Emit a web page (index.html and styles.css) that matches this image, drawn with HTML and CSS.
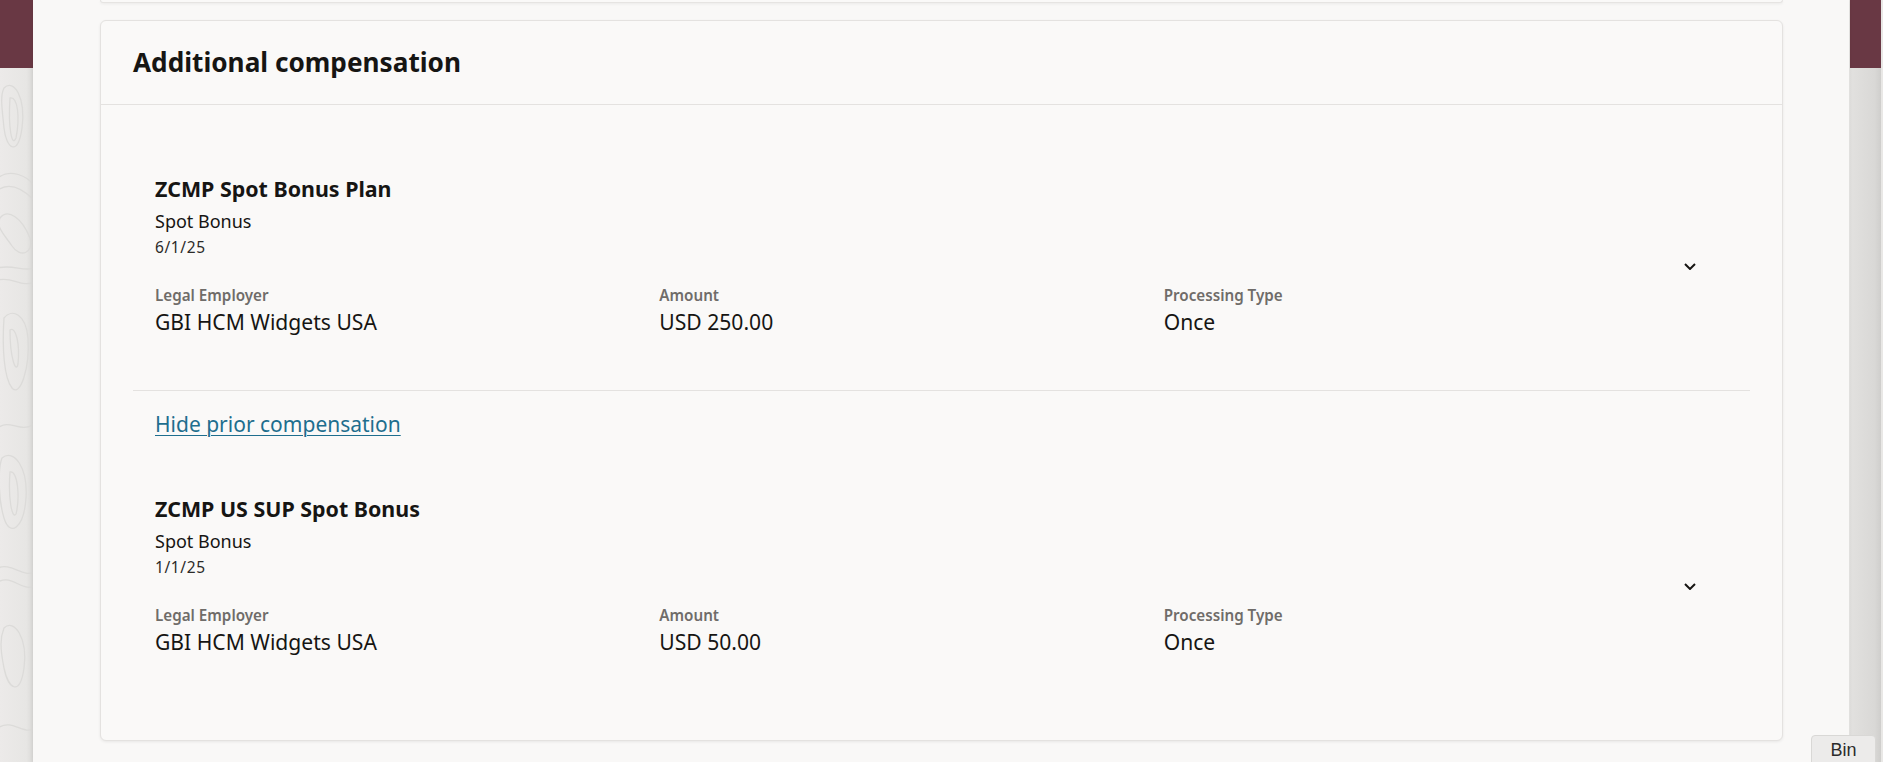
FILE: index.html
```html
<!DOCTYPE html>
<html lang="en">
<head>
<meta charset="utf-8">
<title>Additional compensation</title>
<link rel="stylesheet" href="styles.css">
</head>
<body>
<div class="page">
  <aside class="side side-left">
    <div class="band"></div>
    <div class="topo">
      <svg class="topo-art" width="33" height="694" viewBox="0 0 33 694" fill="none" stroke="#dcdbd9" stroke-width="1.3">
        <path d="M4 20 C14 10 26 30 22 60 C18 90 6 80 4 60 C2 40 0 28 4 20 Z"/>
        <path d="M10 30 C18 28 20 50 16 70 C12 80 8 60 10 30 Z"/>
        <path d="M-2 110 C10 100 28 108 34 118"/>
        <path d="M-2 122 C12 112 26 124 34 132"/>
        <path d="M0 150 C8 140 22 150 30 170 C34 186 20 190 12 178 C4 166 -4 160 0 150 Z"/>
        <path d="M-2 200 C12 196 24 204 34 200"/>
        <path d="M-2 212 C12 208 22 220 34 214"/>
        <path d="M4 250 C12 240 26 246 28 270 C30 300 20 330 12 320 C4 310 2 280 4 250 Z"/>
        <path d="M10 262 C16 258 20 276 18 296 C16 306 10 290 10 262 Z"/>
        <path d="M-2 360 C10 350 20 366 34 356"/>
        <path d="M2 390 C14 380 28 400 26 430 C24 460 10 470 4 450 C-2 430 -2 400 2 390 Z"/>
        <path d="M10 404 C18 402 20 430 16 446 C12 452 8 430 10 404 Z"/>
        <path d="M-2 500 C10 494 24 510 34 504"/>
        <path d="M-2 514 C12 506 22 524 34 518"/>
        <path d="M4 560 C14 550 28 570 24 600 C20 630 8 620 4 600 C0 580 0 570 4 560 Z"/>
        <path d="M-2 660 C12 650 24 668 34 660"/>
      </svg>
    </div>
  </aside>

  <main class="panel">
    <div class="prev-card"></div>
    <section class="card">
      <header class="card-header">
        <h2 class="card-title">Additional compensation</h2>
      </header>
      <div class="card-body">
        <div class="comp-item">
          <div class="comp-main">
            <div class="comp-title">ZCMP Spot Bonus Plan</div>
            <div class="comp-sub">Spot Bonus</div>
            <div class="comp-date">6/1/25</div>
            <div class="fields">
              <div class="field">
                <div class="label">Legal Employer</div>
                <div class="value">GBI HCM Widgets USA</div>
              </div>
              <div class="field">
                <div class="label">Amount</div>
                <div class="value">USD 250.00</div>
              </div>
              <div class="field">
                <div class="label">Processing Type</div>
                <div class="value">Once</div>
              </div>
            </div>
          </div>
          <button class="chev" type="button" aria-label="Expand">
            <svg width="12" height="7" viewBox="0 0 12 7" fill="none"><path d="M1 1 L6 6 L11 1" stroke="#161513" stroke-width="2"/></svg>
          </button>
        </div>

        <div class="divider"></div>

        <div class="link-row">
          <a class="link" href="#">Hide prior compensation</a>
        </div>

        <div class="comp-item">
          <div class="comp-main">
            <div class="comp-title">ZCMP US SUP Spot Bonus</div>
            <div class="comp-sub">Spot Bonus</div>
            <div class="comp-date">1/1/25</div>
            <div class="fields">
              <div class="field">
                <div class="label">Legal Employer</div>
                <div class="value">GBI HCM Widgets USA</div>
              </div>
              <div class="field">
                <div class="label">Amount</div>
                <div class="value">USD 50.00</div>
              </div>
              <div class="field">
                <div class="label">Processing Type</div>
                <div class="value">Once</div>
              </div>
            </div>
          </div>
          <button class="chev" type="button" aria-label="Expand">
            <svg width="12" height="7" viewBox="0 0 12 7" fill="none"><path d="M1 1 L6 6 L11 1" stroke="#161513" stroke-width="2"/></svg>
          </button>
        </div>
      </div>
    </section>
  </main>

  <aside class="side side-right">
    <div class="band"></div>
    <div class="rail"></div>
  </aside>

  <div class="bin">Bin</div>
</div>
</body>
</html>
```

FILE: styles.css
```css
* { box-sizing: border-box; }

html, body {
  margin: 0;
  padding: 0;
  height: 762px;
  overflow: hidden;
}

body {
  font-family: "Noto Sans", "Open Sans", sans-serif;
  color: #161513;
  background: #e9e8e6;
}

.page {
  position: relative;
  display: flex;
  height: 762px;
  width: 1883px;
}

.side {
  display: flex;
  flex-direction: column;
  flex: none;
}

.side-left { width: 33px; }
.side-right { width: 34px; }

.band {
  height: 68px;
  background: #693844;
  flex: none;
}

.side-right .band {
  margin-left: 1px;
  margin-right: 2px;
}

.topo {
  flex: 1;
  background: linear-gradient(to right, #eceae9 0%, #e7e6e4 80%, #dad9d7 100%);
  overflow: hidden;
}

.topo-art { display: block; }

.rail {
  flex: 1;
  margin-left: 1px;
  margin-right: 2px;
  background: linear-gradient(to right, #e2e1df, #d9d8d6 80%, #cfcecc);
}

.panel {
  flex: none;
  width: 1816px;
  background: #f9f8f7;
  padding: 0 66px 0 67px;
  box-shadow: 0 0 4px rgba(0, 0, 0, 0.08);
  position: relative;
  z-index: 1;
}

.prev-card {
  height: 3px;
  background: #faf9f8;
  border: 1px solid #e6e4e2;
  border-top: none;
  border-radius: 0 0 6px 6px;
  box-shadow: 0 1px 3px rgba(0, 0, 0, 0.06);
}

.card {
  margin-top: 17px;
  background: #faf9f8;
  border: 1px solid #e4e2e0;
  border-radius: 6px;
  box-shadow: 0 1px 3px rgba(0, 0, 0, 0.07);
  height: 721px;
}

.card-header {
  padding: 25px 32px 26px;
  border-bottom: 1px solid #e4e2e0;
}

.card-title {
  margin: 0;
  font-size: 26.2px;
  line-height: 32px;
  font-weight: 700;
  color: #161513;
}

.card-body {
  padding: 38px 32px 32px;
}

.comp-item {
  display: flex;
  align-items: center;
  padding: 32px 38px 54px 22px;
}

.comp-main {
  flex: 1;
  min-width: 0;
}

.comp-title {
  font-size: 21.4px;
  line-height: 28px;
  font-weight: 700;
}

.comp-sub {
  margin-top: 6px;
  font-size: 18px;
  line-height: 24px;
}

.comp-date {
  margin-top: 4px;
  font-size: 15.5px;
  line-height: 20px;
  letter-spacing: 0.6px;
  color: #2b2a28;
}

.fields {
  margin-top: 28px;
  display: grid;
  grid-template-columns: repeat(3, 1fr);
}

.label {
  font-size: 15.2px;
  line-height: 20px;
  font-weight: 600;
  color: #6f6c69;
}

.value {
  margin-top: 3px;
  font-size: 21.1px;
  line-height: 28px;
  color: #161513;
}

.chev {
  flex: none;
  width: 44px;
  height: 44px;
  margin-top: 21px;
  border: none;
  background: transparent;
  padding: 0;
  display: flex;
  align-items: center;
  justify-content: center;
}

.chev svg { display: block; }

.divider {
  height: 1px;
  background: #e4e2e0;
}

.link-row {
  padding: 19px 22px 23px;
  line-height: 28px;
}

.link {
  font-size: 21px;
  line-height: 28px;
  color: #1e6e8e;
  text-decoration: underline;
  text-underline-offset: 3px;
  text-decoration-thickness: 1px;
}

.bin {
  position: absolute;
  left: 1811px;
  top: 735px;
  width: 65px;
  height: 32px;
  background: #ecebea;
  border: 1px solid #d9d8d6;
  border-radius: 4px 4px 0 0;
  font-family: "Liberation Sans", Arial, sans-serif;
  font-size: 18px;
  color: #2b2b2b;
  text-align: center;
  padding-top: 4px;
  z-index: 2;
}
```
